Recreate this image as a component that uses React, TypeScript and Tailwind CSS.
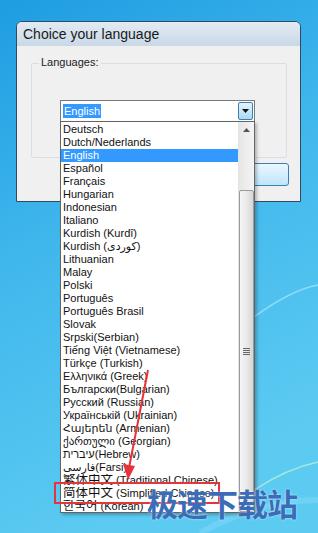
import React from 'react';

const LANGS: [string, string][] = [
  ['', 'Deutsch'],
  ['', 'Dutch/Nederlands'],
  ['', 'English'],
  ['', 'Español'],
  ['', 'Français'],
  ['', 'Hungarian'],
  ['', 'Indonesian'],
  ['', 'Italiano'],
  ['', 'Kurdish (Kurdî)'],
  ['', 'Kurdish (كوردی)'],
  ['', 'Lithuanian'],
  ['', 'Malay'],
  ['', 'Polski'],
  ['', 'Português'],
  ['', 'Português Brasil'],
  ['', 'Slovak'],
  ['', 'Srpski(Serbian)'],
  ['', 'Tiếng Việt (Vietnamese)'],
  ['', 'Türkçe (Turkish)'],
  ['', 'Ελληνικά (Greek)'],
  ['', 'Български(Bulgarian)'],
  ['', 'Русский (Russian)'],
  ['', 'Українській (Ukrainian)'],
  ['', 'Հայերեն (Armenian)'],
  ['', 'ქართული (Georgian)'],
  ['', 'עיברית(Hebrew)'],
  ['', 'فارسی(Farsi)'],
  // CJK names are drawn a bit larger, as in the original dialog
  ['繁体中文', ' (Traditional Chinese)'],
  ['简体中文', ' (Simplified Chinese)'],
  ['한국어', ' (Korean)'],
];

const UI_FONT = "font-['Liberation_Sans','DejaVu_Sans','Noto_Sans_CJK_SC',sans-serif]";

function Desktop() {
  // windows 7 style backdrop with a couple of light swooshes
  return (
    <svg className="absolute inset-0" width="318" height="533" viewBox="0 0 318 533">
      <defs>
        <linearGradient id="bg" x1="0" y1="0" x2="0.3" y2="1">
          <stop offset="0" stopColor="#1e9de2" />
          <stop offset="0.45" stopColor="#3fb6ec" />
          <stop offset="1" stopColor="#5ccbf2" />
        </linearGradient>
      </defs>
      <rect width="318" height="533" fill="url(#bg)" />
      <path d="M250 320 Q290 290 318 285" stroke="#bdeeff" strokeWidth="1.5" fill="none" opacity="0.6" />
      <path d="M240 500 Q280 470 318 462" stroke="#c8f3d0" strokeWidth="1.5" fill="none" opacity="0.7" />
      <path d="M200 533 Q260 500 318 500" stroke="#a8e6ff" strokeWidth="6" fill="none" opacity="0.25" />
    </svg>
  );
}

function Dialog() {
  return (
    <div className="absolute left-[16px] top-[21px] flex h-[181px] w-[285px] flex-col overflow-hidden rounded-t-[6px] border border-[#34495e] bg-[#f0f0f0]">
      <div className="flex h-[24px] items-center bg-gradient-to-b from-[#e3ebf3] to-[#c9d8e7] pl-[6px] pt-[1px] text-[14px] text-[#1a1a1a]">
        Choice your language
      </div>
      <div className="relative flex-1 px-[14px] pt-[17px]">
        <div className="relative h-[95px] w-[256px] rounded-[2px] border border-[#d5dfe5]">
          <span className="absolute -top-[8px] left-[7px] bg-[#f0f0f0] px-[2px] text-[11px] leading-[13px] text-[#1a1a1a]">
            Languages:
          </span>
        </div>
        <div className="absolute left-[228px] top-[117px] h-[23px] w-[44px] rounded-[3px] border border-[#3c7fb1] bg-gradient-to-b from-[#eaf6fd] to-[#bee6fd]" />
      </div>
    </div>
  );
}

function Combo() {
  return (
    <div className="absolute left-[60px] top-[100px] flex h-[22px] w-[195px] items-center border border-[#7a7a7a] bg-white">
      <span className="ml-[2px] bg-[#3399ff] px-[1px] text-[11px] leading-[14px] text-white">English</span>
      <div className="ml-auto mr-[1px] flex h-[18px] w-[15px] items-center justify-center rounded-[2px] border border-[#3c7fb1] bg-gradient-to-b from-[#e5f4fc] to-[#a9d9f5]">
        <svg width="7" height="4" viewBox="0 0 7 4">
          <path d="M0 0 H7 L3.5 4 Z" fill="#111" />
        </svg>
      </div>
    </div>
  );
}

function DropList() {
  return (
    <div className="absolute left-[60px] top-[121px] flex h-[392px] w-[195px] border border-[#646464] bg-white shadow-[2px_2px_3px_rgba(0,0,0,0.25)]">
      <ul className="flex-1 pt-[1px]">
        {LANGS.map(([cjk, rest]) => (
          <li
            key={cjk + rest}
            className={
              'flex h-[13px] items-center overflow-hidden whitespace-nowrap pl-[2px] text-[11px] leading-[13px] ' +
              (rest === 'English' ? 'bg-[#3399ff] text-white' : 'text-[#111]')
            }
          >
            {cjk && <span className="block h-[13px] overflow-hidden text-[12.5px] leading-[13px]">{cjk}</span>}
            <span className="whitespace-pre">{rest}</span>
          </li>
        ))}
      </ul>
      <div className="flex w-[16px] flex-col border-l border-[#e3e3e3] bg-gradient-to-r from-[#e6e6e6] to-[#f4f4f4]">
        <div className="flex h-[16px] items-center justify-center">
          <svg width="7" height="4" viewBox="0 0 7 4">
            <path d="M0 4 H7 L3.5 0 Z" fill="#555" />
          </svg>
        </div>
        <div className="mt-[52px] flex flex-1 items-center justify-center rounded-[2px] border border-[#9a9a9a] bg-gradient-to-r from-[#f6f6f6] via-[#e9e9e9] to-[#d6d6d6]">
          <div className="flex flex-col gap-[1px]">
            <span className="block h-[1px] w-[7px] bg-[#666]" />
            <span className="block h-[1px] w-[7px] bg-[#666]" />
            <span className="block h-[1px] w-[7px] bg-[#666]" />
            <span className="block h-[1px] w-[7px] bg-[#666]" />
          </div>
        </div>
      </div>
    </div>
  );
}

function Annotation() {
  return (
    <>
      <svg className="absolute left-0 top-0" width="318" height="533" viewBox="0 0 318 533">
        <path d="M148 370 L129 468" stroke="#e5343a" strokeWidth="2" fill="none" />
        <path d="M123 464 L128 480 L135 466 Z" fill="#e5343a" />
      </svg>
      <div className="absolute left-[54px] top-[482px] h-[22px] w-[166px] border-2 border-[#e0363c]" />
      <div className="absolute left-[147px] top-[486px] text-[31px] font-bold leading-[34px] tracking-[-1px] text-[#3a6cb8] font-['Noto_Sans_CJK_SC',sans-serif] [text-shadow:0_0_2px_rgba(255,255,255,0.8)]">
        极速下载站
      </div>
    </>
  );
}

export default function App() {
  return (
    <div className={'relative h-[533px] w-[318px] overflow-hidden ' + UI_FONT}>
      <Desktop />
      <Dialog />
      <Combo />
      <DropList />
      <Annotation />
    </div>
  );
}
